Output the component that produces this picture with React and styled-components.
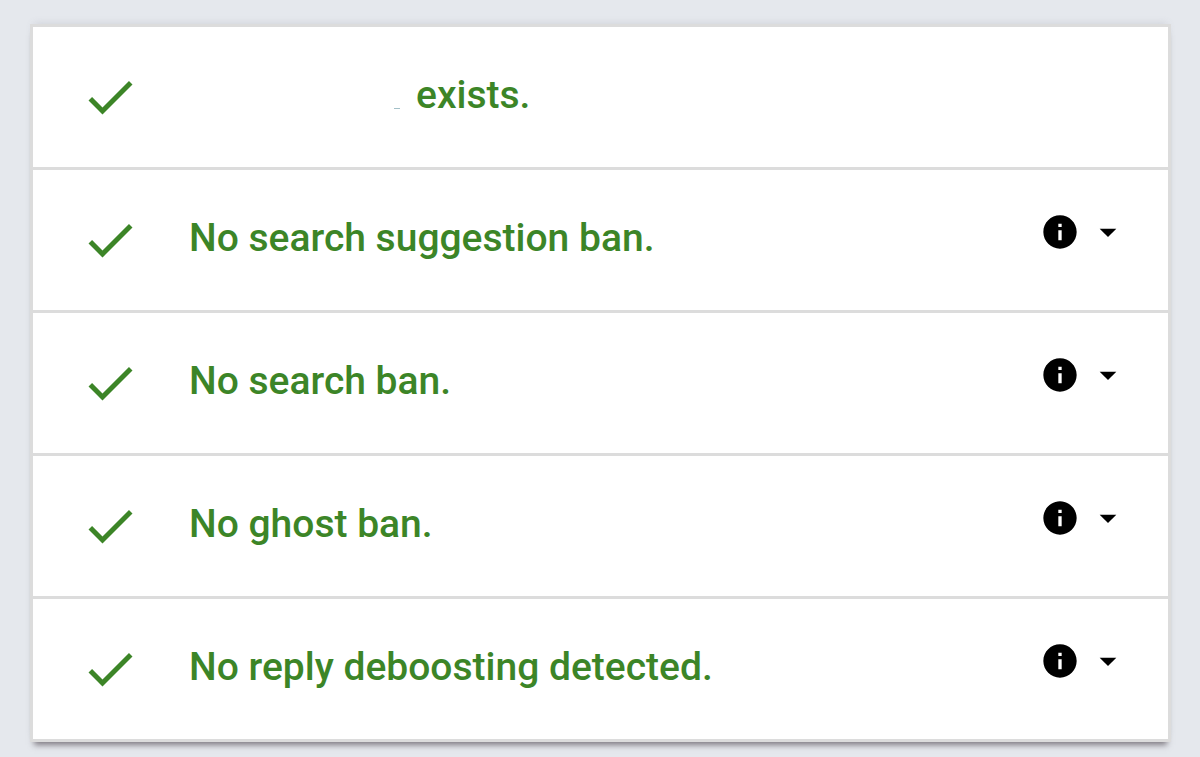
import { useState } from 'react';
import styled, { createGlobalStyle } from 'styled-components';

const GlobalStyle = createGlobalStyle`
  * {
    box-sizing: border-box;
  }

  body {
    margin: 0;
    background-color: #e5e8ed;
    font-family: Roboto, 'Liberation Sans', sans-serif;
  }
`;

const Page = styled.main`
  padding: 24px 29px 15px 30px;
`;

const ResultList = styled.ul`
  margin: 0;
  padding: 0;
  list-style: none;
  background-color: #fff;
  border: 3px solid #dcdcdc;
  box-shadow:
    0 7px 6px -4px rgba(60, 50, 60, 0.6),
    0 -4px 8px -4px rgba(110, 110, 130, 0.2);
`;

const ResultRow = styled.li`
  display: flex;
  align-items: center;
  min-height: 140px;
  padding: 24px 40px 24px 47px;

  & + & {
    min-height: 143px;
    border-top: 3px solid #dcdcdc;
  }
`;

const StatusIcon = styled.svg`
  flex: none;
  width: 60px;
  height: 60px;
  margin-right: 49px;
  fill: #3c8527;
`;

const Message = styled.div`
  display: flex;
  flex: 1;
  padding-bottom: 4px;
  color: #3c8527;
  font-size: 39px;
  font-weight: 500;
  line-height: 60px;
`;

const HandleSlot = styled.span`
  display: flex;
  justify-content: flex-end;
  align-items: flex-end;
  width: 227px;
  padding: 0 16px 16px 0;

  &::after {
    content: '';
    width: 6px;
    height: 1px;
    background-color: #a3c0c8;
  }
`;

const DetailsButton = styled.button`
  display: flex;
  gap: 8px;
  margin: 0 0 16px;
  padding: 0;
  border: 0;
  background: none;
  color: #000;
  cursor: pointer;
`;

const ActionIcon = styled.svg`
  width: 40px;
  height: 40px;
  fill: currentColor;
`;

const results = [
  { id: 'exists', text: 'exists.', handle: true },
  { id: 'suggestion', text: 'No search suggestion ban.', details: true },
  { id: 'search', text: 'No search ban.', details: true },
  { id: 'ghost', text: 'No ghost ban.', details: true },
  { id: 'reply', text: 'No reply deboosting detected.', details: true },
];

function Result({ result }) {
  const [open, setOpen] = useState(false);

  return (
    <ResultRow>
      <StatusIcon viewBox="0 0 24 24" aria-hidden="true">
        <path d="M9 16.17L4.83 12l-1.42 1.41L9 19 21 7l-1.41-1.41z" />
      </StatusIcon>
      <Message>
        {result.handle && <HandleSlot />}
        {result.text}
      </Message>
      {result.details && (
        <DetailsButton
          type="button"
          aria-label={`Details: ${result.text}`}
          aria-expanded={open}
          onClick={() => setOpen(!open)}
        >
          <ActionIcon viewBox="0 0 24 24" aria-hidden="true">
            <path d="M12 2C6.48 2 2 6.48 2 12s4.48 10 10 10 10-4.48 10-10S17.52 2 12 2zm1 15h-2v-6h2v6zm0-8h-2V7h2v2z" />
          </ActionIcon>
          <ActionIcon viewBox="0 0 24 24" aria-hidden="true">
            <path d="M7 10l5 5 5-5z" />
          </ActionIcon>
        </DetailsButton>
      )}
    </ResultRow>
  );
}

export default function App() {
  return (
    <>
      <GlobalStyle />
      <Page>
        <ResultList>
          {results.map((result) => (
            <Result key={result.id} result={result} />
          ))}
        </ResultList>
      </Page>
    </>
  );
}
